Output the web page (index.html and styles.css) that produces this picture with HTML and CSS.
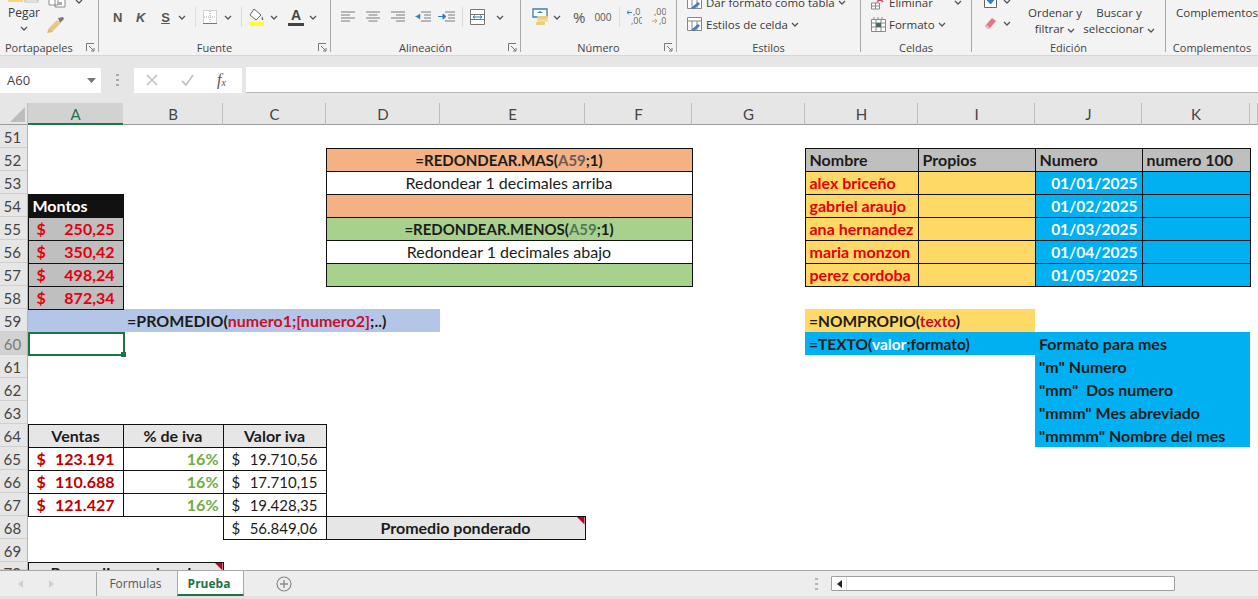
FILE: index.html
```html
<!DOCTYPE html>
<html lang="es">

<head>
  <meta charset="UTF-8" />
  <title>Prueba - Excel</title>
  <link rel="stylesheet" href="styles.css">
</head>

<body>

  <!-- Cinta de opciones -->
  <div class="ribbon">

    <div class="group g-porta">
      <div class="group-body">
        <div class="paste">
          <svg class="paste-top" width="32" height="4" viewBox="0 0 32 4"><rect x="0" y="0" width="15" height="2" fill="#f5d77e"/><rect x="17" y="0" width="13" height="2" fill="#fff" stroke="#999" stroke-width=".6"/></svg>
          <span>Pegar</span>
          <svg class="paste-chev" width="8" height="5" viewBox="0 0 8 5"><path d="M1 1l3 3 3-3" class="chev"/></svg>
        </div>
        <div class="clip-tools">
          <svg width="42" height="8" viewBox="0 0 42 8"><path d="M1 0v5h9V0M7 0v7h10V0" fill="#fff" stroke="#8a8a8a"/><rect x="10" y="2" width="4" height="3" fill="#aaa"/><path d="M28 0l3 3 3-3" class="chev"/></svg>
          <svg class="brush" width="20" height="18" viewBox="0 0 20 18"><path d="M12 2l5-1 1 2-4 4z" fill="#777"/><path d="M3 12l8-8 4 3-6 6-3 3z" fill="#e8c88a"/><path d="M3 12l4 4-6 1z" fill="#e3b96a"/></svg>
        </div>
      </div>
      <div class="group-label label-left">Portapapeles</div>
      <svg class="launcher" width="9" height="9" viewBox="0 0 9 9"><path d="M.5 8V.5H8M3 3l5 5M8 5v3H5" fill="none" stroke="#777"/></svg>
    </div>

    <div class="group g-fuente">
      <div class="group-body">
        <span class="fmt ml-14">N</span>
        <span class="fmt fmt-k ml-14">K</span>
        <span class="fmt fmt-s ml-16">S</span>
        <svg class="ml-8" width="8" height="5" viewBox="0 0 8 5"><path d="M1 1l3 3 3-3" class="chev"/></svg>
        <i class="sep ml-9"></i>
        <svg class="ml-7" width="14" height="14" viewBox="0 0 14 14"><path d="M.5.500h13v13H.5z" fill="#fff" stroke="#aaa" stroke-dasharray="1 1"/><path d="M7 1v12M1 7h12" stroke="#aaa" stroke-dasharray="1 1"/><path d="M0 13.500h14" stroke="#777"/></svg>
        <svg class="ml-7" width="8" height="5" viewBox="0 0 8 5"><path d="M1 1l3 3 3-3" class="chev"/></svg>
        <i class="sep ml-9"></i>
        <svg class="ml-6" width="17" height="18" viewBox="0 0 17 18"><path d="M6 1l7 6-5 5-6-5z" fill="#fff" stroke="#666"/><path d="M14 8c1 2 2 3 1 4s-2-1-1-4z" fill="#777"/><rect x="1" y="14" width="15" height="4" fill="#ffff33"/></svg>
        <svg class="ml-5" width="8" height="5" viewBox="0 0 8 5"><path d="M1 1l3 3 3-3" class="chev"/></svg>
        <span class="font-color ml-10">A</span>
        <svg class="ml-5" width="8" height="5" viewBox="0 0 8 5"><path d="M1 1l3 3 3-3" class="chev"/></svg>
      </div>
      <div class="group-label">Fuente</div>
      <svg class="launcher" width="9" height="9" viewBox="0 0 9 9"><path d="M.5 8V.5H8M3 3l5 5M8 5v3H5" fill="none" stroke="#777"/></svg>
    </div>

    <div class="group g-alinea">
      <div class="group-body">
        <svg class="ml-10" width="14" height="12" viewBox="0 0 14 12"><path d="M0 1h14M0 4h9M0 7h14M0 10h9" class="lines"/></svg>
        <svg class="ml-11" width="14" height="12" viewBox="0 0 14 12"><path d="M0 1h14M2.500 4h9M0 7h14M2.500 10h9" class="lines"/></svg>
        <svg class="ml-11" width="14" height="12" viewBox="0 0 14 12"><path d="M0 1h14M5 4h9M0 7h14M5 10h9" class="lines"/></svg>
        <svg class="ml-10" width="16" height="12" viewBox="0 0 16 12"><path d="M6 1h10M9 4h7M9 7h7M6 10h10" class="lines"/><path d="M0 5.500h4M5 3v5L1 5.500z" fill="#2f7fc4" stroke="#2f7fc4" stroke-width=".5"/></svg>
        <svg class="ml-7" width="17" height="12" viewBox="0 0 17 12"><path d="M7 1h10M10 4h7M10 7h7M7 10h10" class="lines"/><path d="M0 5.500h6M5 3l3 2.500L5 8z" fill="#2f7fc4" stroke="#2f7fc4"/></svg>
        <i class="sep ml-7"></i>
        <svg class="ml-7" width="15" height="16" viewBox="0 0 15 16"><path d="M.5.500h14v15H.5zM.5 5.500h14M.5 10.500h14" fill="#fff" stroke="#777"/><path d="M3 8h9M3 8l2-1.500M3 8l2 1.500M12 8l-2-1.500M12 8l-2 1.500" stroke="#2f7fc4" fill="none"/></svg>
        <svg class="ml-11" width="8" height="5" viewBox="0 0 8 5"><path d="M1 1l3 3 3-3" class="chev"/></svg>
      </div>
      <div class="group-label">Alineación</div>
      <svg class="launcher" width="9" height="9" viewBox="0 0 9 9"><path d="M.5 8V.5H8M3 3l5 5M8 5v3H5" fill="none" stroke="#777"/></svg>
    </div>

    <div class="group g-numero">
      <div class="group-body">
        <svg class="ml-11" width="18" height="18" viewBox="0 0 18 18"><path d="M1 1h14v8H1z" fill="#fff" stroke="#3a7fb5" stroke-width="1.300"/><path d="M8 3l-3 2h6z" fill="#3a7fb5"/><rect x="5" y="8" width="11" height="3" rx="1" fill="#e8cf7e"/><rect x="5" y="11" width="11" height="3" rx="1" fill="#f0dc98"/><rect x="4" y="14" width="9" height="3" rx="1" fill="#e8cf7e"/></svg>
        <svg class="ml-3" width="8" height="5" viewBox="0 0 8 5"><path d="M1 1l3 3 3-3" class="chev"/></svg>
        <span class="pct ml-12">%</span>
        <span class="miles ml-9">000</span>
        <i class="sep ml-7"></i>
        <svg class="ml-7" width="15" height="18" viewBox="0 0 15 18"><text x="6" y="7" class="dec">,0</text><text x="4" y="16" class="dec">,00</text><path d="M0 4.500h5M0 4.500l2-2M0 4.500l2 2" stroke="#2f7fc4" fill="none"/></svg>
        <svg class="ml-9" width="15" height="18" viewBox="0 0 15 18"><text x="3" y="7" class="dec">,00</text><text x="8" y="16" class="dec">,0</text><path d="M1 13h5M6 13l-2-2M6 13l-2 2" stroke="#e0a040" fill="none"/></svg>
      </div>
      <div class="group-label">Número</div>
      <svg class="launcher" width="9" height="9" viewBox="0 0 9 9"><path d="M.5 8V.5H8M3 3l5 5M8 5v3H5" fill="none" stroke="#777"/></svg>
    </div>

    <div class="group g-estilos">
      <div class="group-body stack">
        <div class="stack-item">
          <svg width="16" height="15" viewBox="0 0 16 15"><path d="M.5.500h14v13H.5zM.5 4h14M5 4v9M10 4v9" fill="#fff" stroke="#888"/><path d="M4 13l7-6 2 2-6 5z" fill="#3f7cc0"/></svg>
          <span>Dar formato como tabla</span>
          <svg width="8" height="5" viewBox="0 0 8 5"><path d="M1 1l3 3 3-3" class="chev"/></svg>
        </div>
        <div class="stack-item">
          <svg width="16" height="15" viewBox="0 0 16 15"><path d="M.5.500h14v13H.5zM.5 4h14M5 4v9M10 4v9" fill="#fff" stroke="#888"/><path d="M4 13l7-6 2 2-6 5z" fill="#3f7cc0"/></svg>
          <span>Estilos de celda</span>
          <svg width="8" height="5" viewBox="0 0 8 5"><path d="M1 1l3 3 3-3" class="chev"/></svg>
        </div>
      </div>
      <div class="group-label">Estilos</div>
    </div>

    <div class="group g-celdas">
      <div class="group-body stack">
        <div class="stack-item">
          <svg width="15" height="15" viewBox="0 0 15 15"><path d="M.5 8h8v6h-8zM.5 11h8M4.500 8v6" fill="#fff" stroke="#888"/><path d="M6 1l6 6M12 1L6 7" stroke="#e04050" stroke-width="1.500"/></svg>
          <span>Eliminar</span>
          <svg class="ml-18" width="8" height="5" viewBox="0 0 8 5"><path d="M1 1l3 3 3-3" class="chev"/></svg>
        </div>
        <div class="stack-item">
          <svg width="15" height="15" viewBox="0 0 15 15"><path d="M.5 2.500h14v12H.5zM.5 6h14M.5 10h14M5 2.500v12M10 2.500v12" fill="#fff" stroke="#888"/><rect x="5" y="6" width="5" height="4" fill="#4a6a5a"/><path d="M3 0v3M7 0v3M11 0v3" stroke="#888"/></svg>
          <span>Formato</span>
          <svg width="8" height="5" viewBox="0 0 8 5"><path d="M1 1l3 3 3-3" class="chev"/></svg>
        </div>
      </div>
      <div class="group-label">Celdas</div>
    </div>

    <div class="group g-edicion">
      <div class="group-body edit-body">
        <div class="edit-icons">
          <div class="edit-row">
            <svg width="13" height="13" viewBox="0 0 13 13"><path d="M.5 0v12.500h12V0" fill="#fff" stroke="#666"/><path d="M6.500 1v7M3 5l3.500 4L10 5z" fill="#2f7fc4" stroke="#2f7fc4"/></svg>
            <svg class="ml-6" width="8" height="5" viewBox="0 0 8 5"><path d="M1 1l3 3 3-3" class="chev"/></svg>
          </div>
          <div class="edit-row">
            <svg width="13" height="13" viewBox="0 0 13 13"><path d="M8 1l4 3-6 7-2 1-3-3z" fill="#e0788c"/><path d="M1 9l3 3 2-1-3-3z" fill="#f2b8c2"/></svg>
            <svg class="ml-6" width="8" height="5" viewBox="0 0 8 5"><path d="M1 1l3 3 3-3" class="chev"/></svg>
          </div>
        </div>
        <div class="big-text w-ordenar">Ordenar y<br>filtrar <svg width="8" height="5" viewBox="0 0 8 5"><path d="M1 1l3 3 3-3" class="chev"/></svg></div>
        <div class="big-text w-buscar">Buscar y<br>seleccionar <svg width="8" height="5" viewBox="0 0 8 5"><path d="M1 1l3 3 3-3" class="chev"/></svg></div>
      </div>
      <div class="group-label">Edición</div>
    </div>

    <div class="group g-compl">
      <div class="group-body">
        <div class="big-text compl-text">Complementos</div>
      </div>
      <div class="group-label">Complementos</div>
    </div>

  </div>

  <!-- Barra de formulas -->
  <div class="formula-bar">
    <div class="name-box">
      <span>A60</span>
      <svg width="9" height="5" viewBox="0 0 9 5"><path d="M0 0h9L4.500 5z" fill="#777"/></svg>
    </div>
    <svg class="grip" width="3" height="12" viewBox="0 0 3 12"><path d="M0 1h3M0 6h3M0 11h3" stroke="#aaa" stroke-width="2"/></svg>
    <div class="fx-box">
      <svg width="12" height="12" viewBox="0 0 12 12"><path d="M1 1l10 10M11 1L1 11" stroke="#c4c4c4" stroke-width="1.600"/></svg>
      <svg width="13" height="12" viewBox="0 0 13 12"><path d="M1 7l4 4 7-10" fill="none" stroke="#c4c4c4" stroke-width="1.800"/></svg>
      <span class="fx">f<sub>x</sub></span>
    </div>
    <div class="formula-input"></div>
  </div>

  <!-- Hoja -->
  <div class="sheet">
    <table>
      <colgroup>
        <col class="c-head"><col class="c-a"><col class="c-b"><col class="c-c"><col class="c-d"><col class="c-e"><col class="c-f"><col class="c-g"><col class="c-h"><col class="c-i"><col class="c-j"><col class="c-k"><col class="c-l">
      </colgroup>
      <thead>
        <tr>
          <th class="corner"><i></i></th>
          <th class="col-on">A</th><th>B</th><th>C</th><th>D</th><th>E</th><th>F</th><th>G</th><th>H</th><th>I</th><th>J</th><th>K</th><th></th>
        </tr>
      </thead>
      <tbody>
        <tr><th>51</th><td colspan="12"></td></tr>
        <tr>
          <th>52</th><td colspan="3"></td>
          <td colspan="3" class="box orange b c caps">=REDONDEAR.MAS(<span class="ref">A59</span>;1)</td>
          <td></td>
          <td class="box gray b">Nombre</td><td class="box gray b">Propios</td><td class="box gray b">Numero</td><td class="box gray b">numero 100</td><td></td>
        </tr>
        <tr>
          <th>53</th><td colspan="3"></td>
          <td colspan="3" class="box c">Redondear 1 decimales arriba</td>
          <td></td>
          <td class="box yellow red b">alex briceño</td><td class="box yellow"></td><td class="box blue date">01/01/2025</td><td class="box blue"></td><td></td>
        </tr>
        <tr>
          <th>54</th><td class="box black b">Montos</td><td colspan="2"></td>
          <td colspan="3" class="box orange"></td>
          <td></td>
          <td class="box yellow red b">gabriel araujo</td><td class="box yellow"></td><td class="box blue date">01/02/2025</td><td class="box blue"></td><td></td>
        </tr>
        <tr>
          <th>55</th><td class="box gray red b"><div class="money"><span>$</span><span>250,25</span></div></td><td colspan="2"></td>
          <td colspan="3" class="box green b c caps">=REDONDEAR.MENOS(<span class="ref-g">A59</span>;1)</td>
          <td></td>
          <td class="box yellow red b">ana hernandez</td><td class="box yellow"></td><td class="box blue date">01/03/2025</td><td class="box blue"></td><td></td>
        </tr>
        <tr>
          <th>56</th><td class="box gray red b"><div class="money"><span>$</span><span>350,42</span></div></td><td colspan="2"></td>
          <td colspan="3" class="box c">Redondear 1 decimales abajo</td>
          <td></td>
          <td class="box yellow red b">maria monzon</td><td class="box yellow"></td><td class="box blue date">01/04/2025</td><td class="box blue"></td><td></td>
        </tr>
        <tr>
          <th>57</th><td class="box gray red b"><div class="money"><span>$</span><span>498,24</span></div></td><td colspan="2"></td>
          <td colspan="3" class="box green"></td>
          <td></td>
          <td class="box yellow red b">perez cordoba</td><td class="box yellow"></td><td class="box blue date">01/05/2025</td><td class="box blue"></td><td></td>
        </tr>
        <tr>
          <th>58</th><td class="box gray red b"><div class="money"><span>$</span><span>872,34</span></div></td><td colspan="11"></td>
        </tr>
        <tr>
          <th>59</th><td class="periwinkle"></td>
          <td colspan="3" class="periwinkle b">=PROMEDIO(<span class="arg">numero1;[numero2]</span>;..)</td>
          <td colspan="3"></td>
          <td colspan="2" class="yellow b caps-md">=NOMPROPIO(<span class="arg">texto</span>)</td>
          <td colspan="3"></td>
        </tr>
        <tr>
          <th class="row-on">60</th><td class="sel"></td><td colspan="6"></td>
          <td colspan="2" class="blue b caps-md">=TEXTO(<span class="white">valor</span>;formato)</td>
          <td colspan="2" class="blue b">Formato para mes</td>
          <td></td>
        </tr>
        <tr><th>61</th><td colspan="9"></td><td colspan="2" class="blue b">"m" Numero</td><td></td></tr>
        <tr><th>62</th><td colspan="9"></td><td colspan="2" class="blue b">"mm"&nbsp; Dos numero</td><td></td></tr>
        <tr><th>63</th><td colspan="9"></td><td colspan="2" class="blue b">"mmm" Mes abreviado</td><td></td></tr>
        <tr>
          <th>64</th>
          <td class="box light b c">Ventas</td><td class="box light b c">% de iva</td><td class="box light b c">Valor iva</td>
          <td colspan="6"></td>
          <td colspan="2" class="blue b">"mmmm" Nombre del mes</td><td></td>
        </tr>
        <tr>
          <th>65</th>
          <td class="box dark-red b"><div class="money"><span>$</span><span>123.191</span></div></td>
          <td class="box pct-cell">16%</td>
          <td class="box plain"><div class="money"><span>$</span><span>19.710,56</span></div></td>
          <td colspan="9"></td>
        </tr>
        <tr>
          <th>66</th>
          <td class="box dark-red b"><div class="money"><span>$</span><span>110.688</span></div></td>
          <td class="box pct-cell">16%</td>
          <td class="box plain"><div class="money"><span>$</span><span>17.710,15</span></div></td>
          <td colspan="9"></td>
        </tr>
        <tr>
          <th>67</th>
          <td class="box dark-red b"><div class="money"><span>$</span><span>121.427</span></div></td>
          <td class="box pct-cell">16%</td>
          <td class="box plain"><div class="money"><span>$</span><span>19.428,35</span></div></td>
          <td colspan="9"></td>
        </tr>
        <tr>
          <th>68</th><td colspan="2"></td>
          <td class="box plain"><div class="money"><span>$</span><span>56.849,06</span></div></td>
          <td colspan="2" class="box light b c note">Promedio ponderado</td>
          <td colspan="7"></td>
        </tr>
        <tr><th>69</th><td colspan="12"></td></tr>
        <tr class="row-cut">
          <th><div class="cut">70</div></th>
          <td colspan="2" class="box light b c note"><div class="cut">Promedio ponderado</div></td>
          <td colspan="10"></td>
        </tr>
      </tbody>
    </table>
  </div>

  <!-- Pestanas -->
  <div class="tabs-bar">
    <svg class="tab-arrow" width="6" height="8" viewBox="0 0 6 8"><path d="M5 0v8L0 4z" fill="#cfcfcf"/></svg>
    <svg class="tab-arrow arrow-next" width="6" height="8" viewBox="0 0 6 8"><path d="M1 0v8l5-4z" fill="#cfcfcf"/></svg>
    <i class="tab-sep"></i>
    <div class="tab">Formulas</div>
    <div class="tab tab-on">Prueba</div>
    <svg class="tab-add" width="16" height="16" viewBox="0 0 16 16"><circle cx="8" cy="8" r="7" fill="none" stroke="#8a8a8a" stroke-width="1.200"/><path d="M8 4v8M4 8h8" stroke="#8a8a8a" stroke-width="1.400"/></svg>
    <svg class="tab-grip" width="3" height="12" viewBox="0 0 3 12"><path d="M0 1h3M0 6h3M0 11h3" stroke="#b5b5b5" stroke-width="2"/></svg>
    <div class="scroll">
      <div class="scroll-btn"><svg width="5" height="8" viewBox="0 0 5 8"><path d="M5 0v8L0 4z" fill="#222"/></svg></div>
    </div>
  </div>

</body>

</html>
```

FILE: styles.css
```css
html, body {
  margin: 0;
  padding: 0;
  height: 599px;
  overflow: hidden;
}

body {
  display: flex;
  flex-direction: column;
  background: #e6e6e6;
  font-family: "Open Sans", sans-serif;
  font-size: 11px;
  color: #3a3a3a;
}

.chev {
  fill: none;
  stroke: #555;
  stroke-width: 1.3;
}

.lines {
  fill: none;
  stroke: #7a7a7a;
}

/* cinta */
.ribbon {
  display: flex;
  height: 56px;
  flex: none;
  background: #f3f3f3;
  border-bottom: 1px solid #d6d6d6;
  box-sizing: border-box;
}

.group {
  position: relative;
  display: flex;
  flex-direction: column;
  box-sizing: border-box;
  border-right: 1px solid #a8a8a8;
  margin-bottom: 3px;
}

.g-porta { width: 99px; }
.g-fuente { width: 232px; }
.g-alinea { width: 190px; }
.g-numero { width: 156px; }
.g-estilos { width: 184px; }
.g-celdas { width: 111px; }
.g-edicion { width: 194px; }
.g-compl { width: 92px; border-right: none; }

.group-body {
  height: 40px;
  flex: none;
  display: flex;
  align-items: center;
  padding-bottom: 6px;
  box-sizing: border-box;
  overflow: hidden;
}

.group-label {
  text-align: center;
  line-height: 16px;
  height: 16px;
  color: #444;
}

.label-left {
  text-align: left;
  padding-left: 5px;
}

.launcher {
  position: absolute;
  right: 3px;
  bottom: 0;
}

.sep {
  display: block;
  width: 1px;
  height: 20px;
  background: #dcdcdc;
}

.ml-3 { margin-left: 3px; }
.ml-5 { margin-left: 5px; }
.ml-6 { margin-left: 6px; }
.ml-7 { margin-left: 7px; }
.ml-8 { margin-left: 8px; }
.ml-9 { margin-left: 9px; }
.ml-10 { margin-left: 10px; }
.ml-11 { margin-left: 11px; }
.ml-12 { margin-left: 12px; }
.ml-14 { margin-left: 14px; }
.ml-16 { margin-left: 16px; }
.ml-18 { margin-left: 18px; }

.paste {
  width: 48px;
  height: 40px;
  display: flex;
  flex-direction: column;
  align-items: center;
  font-size: 12px;
  align-self: flex-start;
}

.paste-top {
  flex: none;
  margin-bottom: 1px;
}

.paste span {
  line-height: 16px;
}

.paste-chev {
  margin-top: 5px;
  flex: none;
}

.clip-tools {
  display: flex;
  flex-direction: column;
  align-self: flex-start;
  height: 40px;
  gap: 8px;
}

.brush {
  margin-left: -2px;
}

.fmt {
  font-family: "Liberation Sans", sans-serif;
  font-weight: 700;
  font-size: 13px;
  color: #555;
  width: 9px;
  text-align: center;
}

.fmt-k { font-style: italic; }
.fmt-s { text-decoration: underline; }

.font-color {
  width: 16px;
  height: 15px;
  font-family: "Liberation Sans", sans-serif;
  font-weight: 700;
  font-size: 14px;
  line-height: 14px;
  text-align: center;
  color: #444;
  border-bottom: 3px solid #444;
}

.pct {
  font-size: 15px;
  color: #555;
}

.miles {
  font-size: 10px;
  color: #555;
}

.dec {
  font-size: 9px;
  fill: #666;
  font-family: "Open Sans", sans-serif;
}

.stack {
  flex-direction: column;
  align-items: flex-start;
  justify-content: flex-end;
  padding-left: 10px;
  padding-bottom: 5px;
  font-size: 11.5px;
}

.stack-item {
  display: flex;
  align-items: center;
  gap: 3px;
  height: 22px;
  flex: none;
  white-space: nowrap;
}

.edit-body {
  align-items: flex-end;
  padding-bottom: 0;
}

.edit-icons {
  width: 44px;
  padding-left: 12px;
  box-sizing: border-box;
  align-self: flex-end;
  padding-bottom: 6px;
  flex: none;
}

.edit-row {
  display: flex;
  align-items: center;
  height: 22px;
}

.big-text {
  text-align: center;
  line-height: 16px;
  font-size: 11.5px;
  white-space: nowrap;
  align-self: flex-start;
  padding-top: 5px;
}

.w-ordenar { width: 64px; margin-left: 7px; }
.w-buscar { width: 76px; margin-left: -6px; }
.compl-text { padding-left: 10px; }

/* barra de formulas */
.formula-bar {
  display: flex;
  align-items: center;
  flex: none;
  height: 47px;
  padding: 11px 0 10px;
  box-sizing: border-box;
  background: #e6e6e6;
}

.name-box {
  width: 101px;
  height: 25px;
  background: #fff;
  display: flex;
  align-items: center;
  justify-content: space-between;
  padding: 0 5px 0 7px;
  box-sizing: border-box;
  font-size: 13px;
  color: #444;
}

.grip {
  margin: 0 15px 0 15px;
}

.fx-box {
  width: 108px;
  height: 25px;
  background: #fff;
  display: flex;
  align-items: center;
  gap: 23px;
  padding-left: 12px;
  box-sizing: border-box;
}

.fx {
  font-family: "Liberation Serif", serif;
  font-style: italic;
  font-size: 16px;
  color: #555;
}

.fx sub {
  font-size: 10px;
  vertical-align: -1px;
}

.formula-input {
  flex: 1;
  height: 26px;
  margin-left: 4px;
  box-sizing: border-box;
  background: #fff;
  border-bottom: 1px solid #b8b8b8;
}

/* hoja */
.sheet {
  flex: 1;
  min-height: 0;
  overflow: hidden;
  background: #fff;
}

table {
  border-collapse: collapse;
  table-layout: fixed;
  width: 1258px;
  font-family: Lato, sans-serif;
  font-size: 16px;
  color: #1c1c1c;
}

.c-head { width: 28px; }
.c-a { width: 95px; }
.c-b { width: 100px; }
.c-c { width: 103px; }
.c-d { width: 114px; }
.c-e { width: 145px; }
.c-f { width: 107px; }
.c-g { width: 113px; }
.c-h { width: 113px; }
.c-i { width: 117px; }
.c-j { width: 107px; }
.c-k { width: 108px; }
.c-l { width: 8px; }

th {
  padding: 0;
  font-weight: 400;
  background: #e6e6e6;
  color: #444;
  box-sizing: border-box;
}

thead th {
  height: 22px;
  font-size: 15px;
  box-shadow: inset -1px 0 #bdbdbd, inset 0 -1px #9c9c9c;
}

thead .corner {
  position: relative;
}

.corner i {
  position: absolute;
  right: 3px;
  bottom: 3px;
  width: 15px;
  height: 15px;
  background: #bdbdbd;
  clip-path: polygon(100% 0, 100% 100%, 0 100%);
}

thead .col-on {
  background: #d2d2d2;
  color: #217346;
  box-shadow: inset 0 -2px #217346;
}

tbody th {
  height: 23px;
  font-size: 15px;
  padding-right: 3px;
  box-shadow: inset -1px 0 #b5b5b5, inset 0 -1px #cfcfcf;
}

tbody .row-on {
  background: #d2d2d2;
  color: #7a7a7a;
}

td {
  height: 23px;
  padding: 0 4px;
  box-sizing: border-box;
  white-space: nowrap;
  overflow: hidden;
  line-height: 20px;
}

/* la fila 70 queda cortada por las pestanas */
.row-cut th,
.row-cut td {
  height: 8px;
}

.cut {
  height: 7px;
  line-height: 20px;
  overflow: hidden;
}

.box { border: 1px solid #111; }
.b { font-weight: 700; }
.c { text-align: center; }
.caps { font-size: 15px; }
.caps-md { font-size: 15.5px; }
.plain { font-size: 15px; }

.orange { background: #f4b183; }
.green { background: #a9d18e; }
.gray { background: #bfbfbf; }
.black { background: #111; color: #fff; }
.yellow { background: #ffd966; }
.blue { background: #00b0f0; }
.periwinkle { background: #b4c6e7; }
.light { background: #e7e6e6; }

.red { color: #e3000f; }
.dark-red { color: #c00000; }
.arg { color: #c8102e; }
.white { color: #fff; }
.ref { color: #6b5b5b; }
.ref-g { color: #4f7a55; }

.date {
  color: #fff;
  text-align: right;
  font-weight: 700;
  font-size: 15.5px;
}

.pct-cell {
  text-align: right;
  color: #70ad47;
  font-weight: 700;
}

.money {
  display: flex;
  justify-content: space-between;
  padding: 0 4px;
}

.sel {
  position: relative;
  overflow: visible;
}

.sel::before {
  content: "";
  position: absolute;
  left: 0;
  top: 0;
  right: -2px;
  bottom: -1px;
  border: 2px solid #217346;
}

.sel::after {
  content: "";
  position: absolute;
  right: -3px;
  bottom: -2px;
  width: 5px;
  height: 5px;
  background: #217346;
}

.note {
  position: relative;
}

.note::after {
  content: "";
  position: absolute;
  top: 0;
  right: 0;
  width: 8px;
  height: 8px;
  background: #c00020;
  clip-path: polygon(0 0, 100% 0, 100% 100%);
}

/* pestanas */
.tabs-bar {
  display: flex;
  align-items: center;
  flex: none;
  height: 29px;
  box-sizing: border-box;
  background: #ededed;
  border-top: 1px solid #a8a8a8;
  border-bottom: 3px solid #e2e2e2;
  font-size: 12px;
  color: #555;
}

.tab-arrow {
  margin-left: 18px;
}

.arrow-next {
  margin-left: 24px;
}

.tab-sep {
  width: 1px;
  height: 24px;
  background: #a8a8a8;
  margin-left: 42px;
}

.tab {
  width: 80px;
  height: 100%;
  padding-right: 3px;
  text-align: center;
  line-height: 25px;
  box-sizing: border-box;
  color: #555;
}

.tab-on {
  width: 67px;
  background: #fff;
  color: #217346;
  font-weight: 700;
  border-left: 1px solid #a8a8a8;
  border-right: 1px solid #a8a8a8;
  border-bottom: 2px solid #217346;
}

.tab-add {
  margin-left: 32px;
}

.tab-grip {
  margin-left: 523px;
}

.scroll {
  width: 344px;
  height: 15px;
  margin-left: 13px;
  background: #fff;
  border: 1px solid #a0a0a0;
  box-sizing: border-box;
  border-radius: 1px;
}

.scroll-btn {
  width: 14px;
  height: 13px;
  display: flex;
  align-items: center;
  justify-content: center;
  border-right: 1px solid #ddd;
}
```
